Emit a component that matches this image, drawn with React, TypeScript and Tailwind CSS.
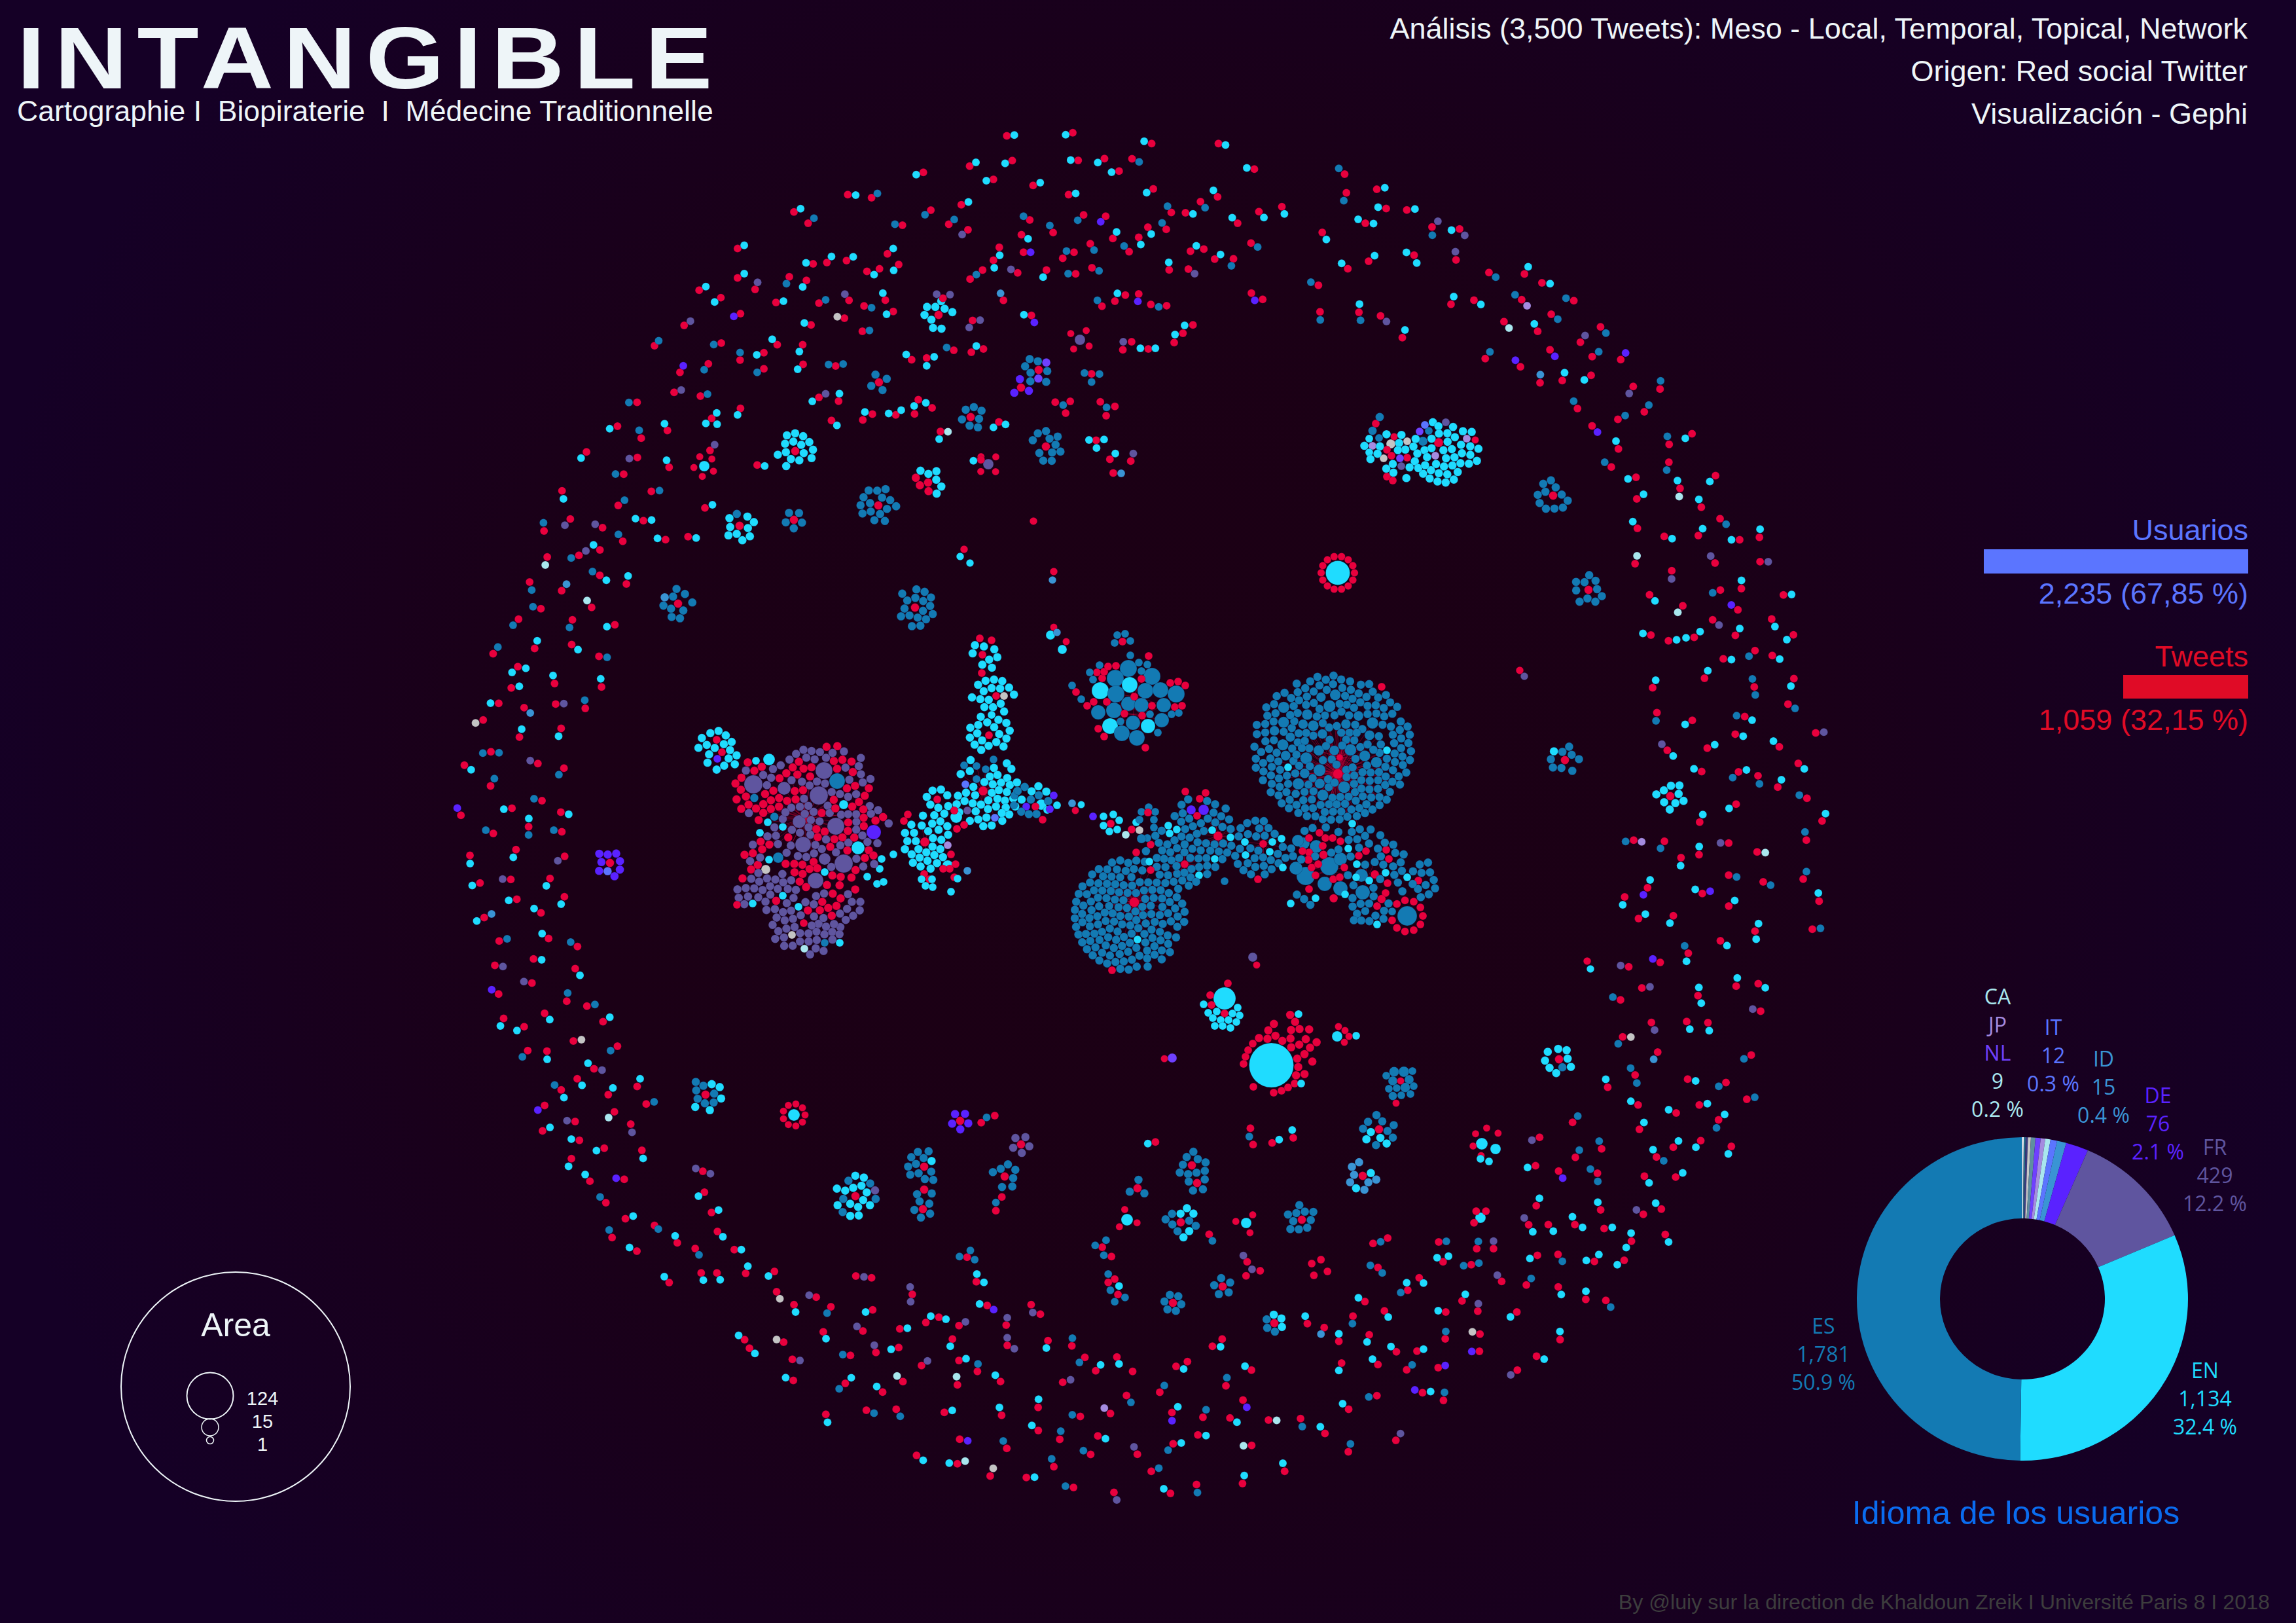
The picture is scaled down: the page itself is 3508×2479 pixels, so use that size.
import React from "react";

const BLUE = "#137ab3", CYAN = "#1fdcff", RED = "#e8003d", PUR = "#5f559f", VIO = "#5a22ff", GRAY = "#c4c4c4",
  LCY = "#a9e7ee", LAV = "#a58be0", MID = "#3a94d4", PER = "#5b75ff", VI2 = "#6f40ff";

type N = { x: number; y: number; r: number; c: string };
type W = [string, number][];

const TOP_DOTS = `844,150r 862,147C 1002,138r 985,146C 1191,181r 1173,172C 1351,181r 1368,187C 1437,283r 1419,278C 857,249r 840,260C 755,271r 770,256C 644,296r 627,305C 812,324r 795,329C 1015,248r 997,247C 1078,241r 1062,257C 1113,291r 1095,295C 1144,242r 1161,254B 907,348r 924,337C 992,385r 1009,380C 1195,362r 1179,377C 1349,394r 1339,368C 1308,413r 1319,437B 1238,456r 1229,431B 1272,457r 1290,462C 1397,499r 1384,477C 1448,453r 1460,476C 1503,433r 1509,462C 463,385r 482,387C 520,397r 534,380B 334,454r 350,441C 368,499r 382,479B 735,425r 752,414C 662,447r 648,465B 594,507r 576,503B 705,503r 718,484B 751,525r 737,544P 899,486r 884,471B 955,536r 947,508B 1028,466r 1014,487B 1081,471r 1069,493V 1098,560r 1107,534C 1182,515r 1190,542C 1226,523r 1216,498B 1160,555r 1165,584C 1137,613r 1125,590B 1044,581r 1053,606B 879,545r 895,561C 826,595r 827,627C 812,647r 884,615r 901,615V 1005,615r 987,610B 978,639r 1316,602r 1298,589C 1284,611r 1429,578r 1445,594B 1387,641r 1382,669B 1342,642r 1356,624C 1233,685r 1232,655C 1279,682r 1294,700P 1009,701r 991,700B 1048,677r 1065,689B 939,686r 931,714C 870,697r 854,683P 814,677C 786,686r 771,704B 756,722r 199,600r 215,587C 380,661r 363,657C 413,656r 424,632C 460,648r 476,633C 558,621r 572,600C 509,691r 526,704C 539,681r 585,664r 573,687C 199,717r 215,700C 241,763r 247,735P 323,713r 316,740B 364,727r 355,753C 107,766r 123,752C 159,796r 144,813C 291,815r 309,810C 394,818r 410,805B 466,807r 456,782P 553,806r 547,778C 502,829r 520,836B 572,851r 556,862C 691,798r 676,782P 708,784P 836,807r 829,779M 1072,830r 1061,807B 1128,786r 1109,779C 1103,810r 1160,781r 1158,811V 1189,823r 1208,833B 1227,828r 1430,778r 1438,807V 1457,803r 206,860r 190,871V 71,907r 86,890P 455,878r 438,872G 375,905r 359,897C 498,930r 515,927B 762,887r 780,886P 754,915P 903,867r 885,864C 910,895V 1290,905r 1270,907C 1266,938r 1247,943C 1245,975r 294,984r 282,962C 160,977r 142,983B 355,984r 347,1011C 262,1016r 245,1024C 205,1045r 205,1015B 0,988r 10,968B 1143,972r 1123,972P 1122,1004r 1183,1001r 1164,998C 1200,998C 788,1001r 771,989C 759,1014r 717,1006r 700,995B 616,1044r 603,1023C 652,1037r 670,1032C 652,1068C 129,1060r 119,1084B 61,1094r 69,1068V 262,1080r 246,1094B 356,1062r 343,1082C 434,1069r 417,1063B 452,1061B 47,1174r 64,1165P 110,1189r 127,1181B 394,1194r 410,1180P 378,1210C 441,1209r 443,1179C 206,1238r 199,1264C 137,1278r 149,1256C 123,1298C 150,1301C 31,1326r 24,1299C 522,1261r 504,1252C 499,1284r 578,1264r 561,1258C 591,1245C 623,1260r 622,1228C 665,1236r 650,1216C 632,1203r 424,1286r 437,1306C 685,1330r 703,1331L 682,1361C 825,1292r 841,1302C 812,1314C 960,1213r 979,1225B 996,1210r 985,1257r 1103,1230r 1083,1234B 1068,1212r 1082,1267r 133,1406r 144,1383P 35,1473r 29,1445C 246,1464r 264,1468C 782,1443r 764,1447C 1091,1441r 1104,1418C 1141,1448r 1147,1418P 1099,1496r 1118,1497M 1058,1365r 1041,1364C 1077,1362C 1059,1396C 1047,1100r 1030,1097B 1066,1101B 1047,1133B`;

const BOTTOM_DOTS = `92,513r 81,531C 105,606r 118,595C 89,417r 76,404P 103,428P 42,745r 38,713C 116,693r 126,717C 75,771r 82,800B 147,776r 160,776C 0,665r 7,682B 168,885r 172,852C 86,883r 90,916C 115,883r 121,914C 27,927r 18,900C 221,876r 210,897C 371,897r 386,901P 400,905r 225,969r 231,1001G 298,994r 285,985P 257,1028r 260,1062C 325,1038r 318,1067B 402,1052r 389,1062C 475,981r 471,947P 472,1015P 593,923r 594,888C 607,926C 613,1032r 599,1025C 625,1051V 694,1028r 697,1064P 711,1072r 524,1086r 509,1081C 537,1095C 500,1110r 561,1124r 573,1107P 648,1122r 650,1088P 384,1149r 373,1128P 452,1139r 466,1136C 311,1153r 316,1184C 166,1189r 155,1169C 238,1200r 225,1188G 175,1228r 185,1252C 254,1279r 268,1284P 361,1261r 347,1257B 408,1247r 405,1214P 450,1225r 436,1233C 549,1186r 545,1219C 650,1215r 650,1180P 663,1230P 725,1193r 722,1227C 769,1217r 770,1182B 492,1307r 503,1286P 561,1284r 574,1276C 595,1334r 596,1300B 793,1270r 783,1293B 852,1268r 856,1300C 813,1331r 822,1304C 881,1334r 982,1289r 975,1323C 961,1311r 1046,1186r 1043,1221C 1028,1219r 1100,1328r 1088,1310C 1266,1296r 1261,1330C 1333,1303r 1323,1278C 1386,1327r 1396,1304B 1444,1317r 1457,1307V 1520,1242r 1506,1243V 1521,1163r 1507,1153G 1457,1185r 1458,1151B 1405,1241r 1417,1232C 1367,1244r 1357,1220C 1317,1166r 1313,1199C 1261,1196r 1261,1162C 1234,1133r 1228,1163M 1287,1081r 1286,1115B 1203,1115r 1199,1081C 1345,1057r 1352,1085C 1458,1062r 1444,1056C 1517,1058r 1518,1024P 1488,1011r 1494,981C 1309,1014r 1297,997C 1388,962r 1375,973B 1409,905r 1417,929C 1386,928C 1333,858r 1319,848B 1341,883B 1505,845r 1491,850B 1519,838B 1453,832r 1442,813C 1463,806C 1561,922r 1553,893P 1445,741r 1459,738B 1515,772r 1518,739B 1546,772r 1546,737P 1351,723r 1338,740B 1324,748r 1022,706r 1028,736B 825,765r 832,733B 812,757B 842,808r 828,802B 576,811r 582,780B 562,808B 590,822B 1092,832r 1085,803P 1101,866P 1116,873r 1090,896r 1228,822r 1211,840r 1240,876r 1215,894r 848,911r 836,888B 836,926r 856,943C 840,962B 854,982r 867,995B 848,1015B 640,535r 629,560B 629,598r 1098,220r 1096,258B 1103,295r 1175,228C 1177,264r 1138,287r 1151,272C 909,290C 923,283r 602,194r 612,170B 627,162r 1514,600r 1532,600r 1510,653r`;

const CODE: Record<string, string> = { r: RED, C: CYAN, B: BLUE, P: PUR, V: VIO, G: GRAY, M: MID, L: LCY };

function buildGraph() {
  let s = 20180412;
  const rnd = () => {
    s |= 0; s = (s + 0x6d2b79f5) | 0;
    let t = Math.imul(s ^ (s >>> 15), 1 | s);
    t = (t + Math.imul(t ^ (t >>> 7), 61 | t)) ^ t;
    return ((t ^ (t >>> 14)) >>> 0) / 4294967296;
  };
  const nodes: N[] = [];
  const edges: [number, number, number, number][] = [];
  const hubs: { x: number; y: number; R: number }[] = [];
  const pick = (w: W) => {
    const tot = w.reduce((a, b) => a + b[1], 0);
    let v = rnd() * tot;
    for (const [c, p] of w) { v -= p; if (v <= 0) return c; }
    return w[0][0];
  };
  const free = (x: number, y: number, r: number, slack = 1) =>
    nodes.every((n) => Math.hypot(n.x - x, n.y - y) > n.r + r - slack);
  const add = (x: number, y: number, r: number, c: string) => { nodes.push({ x, y, r, c }); };
  const list = (r: number, c: string, pts: number[][]) => pts.forEach(([x, y]) => add(x, y, r, c));
  const big = (pts: [number, number, number, string][]) => pts.forEach(([x, y, r, c]) => add(x, y, r, c));
  const hub = (x: number, y: number, R: number, r = 7) => { add(x, y, r, RED); hubs.push({ x, y, R }); };

  // Organic packing: random points relaxed inside a rotated ellipse, around the nodes already placed.
  const fill = (cx: number, cy: number, rx: number, ry: number, w: W, rot = 0, gap = 13, rad = 6.4, fixed = 0) => {
    const a = (rot * Math.PI) / 180, ca = Math.cos(a), sa = Math.sin(a);
    const cell = gap * gap * 0.866;
    const m = Math.max(rx, ry) + 30;
    const pinned: { u: number; v: number; r: number }[] = [];
    let occupied = 0;
    nodes.forEach((n) => {
      const dx = n.x - cx, dy = n.y - cy;
      if (Math.abs(dx) > m || Math.abs(dy) > m) return;
      const u = dx * ca + dy * sa, v = -dx * sa + dy * ca;
      pinned.push({ u, v, r: n.r });
      if ((u * u) / (rx * rx) + (v * v) / (ry * ry) < 1) occupied += Math.PI * n.r * n.r * 1.25;
    });
    const count = fixed || Math.max(0, Math.round((Math.PI * rx * ry - occupied) / cell));
    const pts: { u: number; v: number }[] = [];
    for (let i = 0; i < count; i++) {
      const t = rnd() * 6.283, d = Math.sqrt(rnd());
      pts.push({ u: Math.cos(t) * d * rx, v: Math.sin(t) * d * ry });
    }
    for (let it = 0; it < 70; it++) {
      for (let i = 0; i < pts.length; i++) {
        const p = pts[i];
        for (let j = i + 1; j < pts.length; j++) {
          const q = pts[j];
          const du = q.u - p.u, dv = q.v - p.v;
          if (Math.abs(du) > gap || Math.abs(dv) > gap) continue;
          const d = Math.hypot(du, dv) || 0.01;
          if (d < gap) {
            const f = (gap - d) / d / 2;
            p.u -= du * f; p.v -= dv * f; q.u += du * f; q.v += dv * f;
          }
        }
        for (const k of pinned) {
          const du = p.u - k.u, dv = p.v - k.v;
          const need = rad + k.r + 0.4;
          if (Math.abs(du) > need || Math.abs(dv) > need) continue;
          const d = Math.hypot(du, dv) || 0.01;
          if (d < need) { const f = (need - d) / d; p.u += du * f; p.v += dv * f; }
        }
      }
      for (const p of pts) {
        const e = Math.sqrt((p.u * p.u) / (rx * rx) + (p.v * p.v) / (ry * ry));
        if (e > 1) { p.u /= e; p.v /= e; }
      }
    }
    for (const p of pts) {
      const x = cx + p.u * ca - p.v * sa, y = cy + p.u * sa + p.v * ca;
      if (free(x, y, rad, 2.5)) add(x, y, rad, pick(w));
    }
  };
  const ring = (cx: number, cy: number, R: number, n: number, r: number, w: W, off = 0.3) => {
    for (let i = 0; i < n; i++) {
      const t = off + (i / n) * Math.PI * 2;
      const x = cx + Math.cos(t) * R, y = cy + Math.sin(t) * R;
      if (free(x, y, r, 2)) add(x, y, r, pick(w));
    }
  };
  const star = (cx: number, cy: number, w: W, n = 6, outer = 0) => {
    add(cx, cy, 6.4, RED);
    const total = n + outer;
    if (total <= 6) ring(cx, cy, 13, n, 6.4, w, rnd() * 3);
    else {
      const R = Math.sqrt(total + 1) * 6.8;
      fill(cx, cy, R, R, w, 0, 13, 6.4, total);
    }
  };
  const B: W = [[BLUE, 1]], C: W = [[CYAN, 1]], P: W = [[PUR, 1]], R: W = [[RED, 1]], V: W = [[VIO, 1]];

  // ----- top blue & cyan cluster
  big([
    [1724, 1021, 13, BLUE], [1704, 1036, 13, BLUE], [1760, 1033, 13, BLUE], [1681, 1055, 13, CYAN], [1726, 1046, 12, CYAN],
    [1705, 1060, 13, BLUE], [1750, 1055, 12, BLUE], [1773, 1054, 12, BLUE], [1797, 1060, 13, BLUE], [1724, 1075, 11, BLUE],
    [1744, 1077, 11, BLUE], [1778, 1077, 11, BLUE], [1678, 1088, 11, BLUE], [1702, 1085, 12, BLUE], [1731, 1104, 11, BLUE],
    [1775, 1100, 11, BLUE], [1696, 1109, 12, CYAN], [1754, 1109, 11, CYAN], [1714, 1120, 12, BLUE], [1737, 1127, 12, BLUE],
  ]);
  list(6, RED, [[1733,1064],[1744,1037],[1760,1078],[1718,1090],[1745,1093],[1691,1072],[1671,1072],[1661,1078],[1684,1036],[1676,1027],[1687,1026],[1693,1018],[1705,1017],[1755,1002],[1788,1043],[1800,1041],[1811,1047],[1795,1080],[1806,1078],[1678,1113],[1687,1125],[1750,1142],[1644,1057],[1715,980]]);
  list(6, BLUE, [[1727,1001],[1740,1012],[1753,1015],[1680,1016],[1665,1027],[1670,1038],[1744,1025],[1638,1047],[1652,1068],[1757,1091],[1790,1091],[1801,1089],[1712,1102],[1769,1119],[1707,970],[1719,968],[1703,982],[1727,979]]);
  hubs.push({ x: 1733, y: 1064, R: 50 }, { x: 1745, y: 1093, R: 40 }, { x: 1718, y: 1090, R: 40 });
  list(7, CYAN, [[1605, 970], [1623, 992]]);
  list(5.5, RED, [[1610, 958], [1629, 980]]);

  // ----- big blue A
  hub(2044, 1182, 95, 7.5); hub(2047, 1157, 50, 5);
  add(2119, 1146, 6, CYAN); add(1968, 1172, 6, CYAN); add(2066, 1258, 6, CYAN); add(2111, 1049, 6, RED);
  for (let i = 0; i < 70; i++) {
    const t = rnd() * 6.283, d = Math.sqrt(rnd()) * 85;
    const x = 2025 + Math.cos(t) * d, y = 1135 + Math.sin(t) * d;
    const r = 7.2 + rnd() * 2;
    if (free(x, y, r, 0)) add(x, y, r, BLUE);
  }
  fill(2035, 1142, 121, 110, B);

  // ----- big blue B
  hub(1733, 1378, 60, 7.5); add(1738, 1435, 6, CYAN); add(1699, 1482, 6, RED);
  fill(1726, 1397, 84, 84, B);

  // ----- central band
  hub(1861, 1277, 40); hub(1810, 1320, 35, 6); hub(1930, 1289, 35, 6);
  list(6, CYAN, [[1785,1261],[1787,1273],[1798,1267],[1852,1268],[1880,1279],[1902,1286],[1944,1286],[1958,1281],[1940,1301],[1903,1306],[1856,1312],[1832,1337],[1756,1316]]);
  list(6, RED, [[1758,1290],[1736,1302],[1758,1329],[1922,1343]]);
  big([[1820, 1237, 7, VIO], [1839, 1237, 8, VIO], [1871, 1346, 6, BLUE]]);
  list(6, RED, [[1811, 1209], [1842, 1211], [1833, 1220], [1829, 1246]]);
  big([[1686, 1247, 6, CYAN], [1701, 1244, 6, CYAN], [1710, 1253, 6, CYAN], [1697, 1258, 6, RED], [1686, 1261, 6, CYAN], [1695, 1270, 6, CYAN], [1707, 1267, 6, CYAN], [1736, 1256, 6, CYAN], [1729, 1267, 6, RED], [1741, 1268, 6, GRAY], [1720, 1275, 6, LCY], [1753, 1280, 6, BLUE],[1744, 1281, 7, BLUE], [1670, 1247, 6, VIO], [1638, 1227, 6, MID], [1652, 1229, 5.5, CYAN], [1643, 1238, 5.5, RED],
    [1744, 1240, 6, BLUE], [1755, 1233, 6, BLUE], [1765, 1240, 6, BLUE], [1741, 1252, 6, BLUE], [1754, 1241, 6, RED], [1763, 1252, 6, BLUE], [1763, 1264, 6, BLUE]]);
  fill(1818, 1292, 88, 50, B, -42);
  fill(1832, 1240, 30, 24, B);
  fill(1922, 1295, 38, 42, B);

  // ----- bridge nodes
  big([[1591, 1229, 8, CYAN], [1600, 1237, 6, CYAN], [1582, 1232, 6, RED], [1610, 1215, 6, VIO], [1604, 1236, 6, VIO], [1593, 1252, 6, RED], [1568, 1232, 6, VIO], [1615, 1230, 6, CYAN]]);
  fill(1578, 1222, 30, 22, [[CYAN, 5], [BLUE, 3]], 0, 13, 6.4, 14);

  // ----- right mixed clusters
  big([[2031,1323,14,BLUE],[1995,1338,14,BLUE],[2048,1312,10,BLUE],[1980,1326,10,BLUE],[2024,1350,11,BLUE],[1992,1288,9,BLUE],[2011,1293,10,BLUE],[2048,1357,11,BLUE],[2082,1363,11,BLUE],[2150,1399,15,BLUE],[1983,1284,9,BLUE],[2080,1337,10,BLUE]]);
  ring(2150, 1399, 24, 11, 6, [[RED, 6], [BLUE, 1]], 0);
  list(6, RED, [[2016,1272],[2025,1280],[2036,1280],[2000,1280],[2000,1302],[1990,1300],[2021,1292],[2048,1285],[2004,1325],[2014,1320],[2054,1325],[2010,1337],[2000,1358],[2037,1343],[2047,1340],[2076,1307],[2120,1349],[2087,1300],[2117,1364],[2104,1384],[2118,1298],[2122,1312],[2167,1345]]);
  list(6, CYAN, [[1960,1325],[2060,1296],[2073,1320],[2117,1333],[2150,1340],[2055,1366],[2072,1340],[2010,1372],[1972,1380],[2104,1412],[2092,1345]]);
  hubs.push({ x: 2030, y: 1330, R: 40 }, { x: 2090, y: 1340, R: 30 });
  fill(2020, 1325, 62, 62, [[BLUE, 6], [RED, 1]]);
  fill(2110, 1345, 62, 58, [[BLUE, 9], [RED, 1]], 20);
  fill(2085, 1288, 32, 22, B);
  fill(2178, 1345, 20, 28, B);
  fill(2085, 1390, 26, 20, B);

  // ----- cyan tower
  big([[1497, 975, 6, RED], [1515, 978, 6, RED], [1501, 1000, 6, RED], [1500, 1028, 6, RED], [1522, 1063, 6, RED], [1534, 1063, 6, GRAY], [1511, 1123, 6, RED]]);
  fill(1505, 1000, 19, 27, C);
  fill(1518, 1064, 33, 26, C);
  add(1515, 1092, 6, CYAN);
  fill(1512, 1120, 31, 28, C);
  // ----- cyan big
  hub(1502, 1208, 45);
  add(1475, 1198, 6, PER); add(1520, 1249, 6, PER); add(1478, 1238, 6, PUR);
  list(6, BLUE, [[1518,1160],[1473,1169],[1492,1170],[1506,1175],[1492,1190],[1550,1215],[1555,1208],[1549,1230]]);
  fill(1505, 1207, 50, 55, C);
  // ----- cyan side
  add(1432, 1221, 6, RED);
  fill(1432, 1222, 18, 26, C);
  hub(1413, 1286, 30);
  add(1461, 1248, 9, CYAN); add(1448, 1322, 8, CYAN); add(1448, 1291, 6, LAV);
  list(6, RED, [[1458,1238],[1473,1260],[1462,1266],[1381,1254],[1387,1244],[1453,1305],[1460,1320],[1412,1335],[1420,1343],[1451,1327],[1441,1327],[1458,1340]]);
  list(6, CYAN, [[1463,1342],[1453,1362],[1408,1343],[1414,1353],[1424,1343],[1425,1355]]);
  add(1478, 1330, 6, MID);
  fill(1418, 1285, 37, 42, C);

  // ----- purple/red cluster
  big([[1151,1198,14,PUR],[1198,1204,10,PUR],[1259,1177,13,PUR],[1251,1215,14,PUR],[1279,1193,12,BLUE],[1221,1255,10,PUR],[1277,1262,13,PUR],[1227,1290,12,PUR],[1289,1319,14,PUR],[1246,1345,12,PUR],[1260,1312,9,PUR],[1335,1271,11,VIO],[1311,1295,10,CYAN],[1289,1229,7,CYAN],[1175,1160,9,CYAN],[1170,1328,7,GRAY],[1189,1310,8,BLUE]]);
  list(6, CYAN, [[1155,1162],[1173,1256],[1196,1263],[1161,1272],[1175,1313],[1260,1332],[1325,1339],[1344,1327],[1347,1312],[1365,1305],[1340,1350],[1350,1347],[1196,1368],[1150,1380],[1220,1385],[1283,1440]]);
  hubs.push({ x: 1230, y: 1250, R: 70 });
  add(1095, 1130, 6, RED); add(1096, 1159, 6, VIO); add(1103, 1149, 6, RED);
  fill(1095, 1146, 36, 26, C, 50);
  fill(1165, 1205, 42, 48, [[RED, 8], [PUR, 2], [BLUE, 1]]);
  fill(1262, 1190, 68, 52, [[RED, 5], [PUR, 5]]);
  fill(1310, 1270, 50, 42, [[RED, 7], [PUR, 3]]);
  fill(1225, 1265, 58, 48, [[PUR, 7], [RED, 3]]);
  fill(1275, 1325, 62, 42, [[RED, 6], [PUR, 4]]);
  fill(1175, 1310, 38, 26, [[PUR, 5], [RED, 5]]);
  fill(1170, 1360, 46, 30, [[PUR, 9], [RED, 1]]);
  fill(1275, 1385, 42, 22, [[PUR, 7], [RED, 2]]);
  add(1228, 1410, 6, RED); add(1210, 1428, 6, GRAY); add(1229, 1449, 6, LCY); add(1260, 1440, 6, BLUE); add(1126, 1382, 6, RED);
  fill(1232, 1418, 52, 40, P);

  // ----- top right cyan
  hub(2198, 676, 25);
  add(2150, 699, 6, RED); add(2183, 658, 6, BLUE);
  big([[2177,649,6,PER],[2209,645,6,PUR],[2169,659,6,VI2],[2241,670,6,LAV],[2254,672,5.5,RED],[2193,696,6,LAV],[2174,674,7,BLUE]]);
  fill(2209, 689, 50, 48, C);
  big([[2125,678,7,GRAY],[2097,681,6,LAV],[2119,687,6,RED],[2126,696,6,RED],[2139,700,6,VI2],[2114,700,6,GRAY],[2141,712,6,PUR],[2150,674,6,GRAY],[2130,667,5.5,RED],[2092,670,6,CYAN],[2092,691,6,CYAN],[2107,669,6,BLUE]]);
  list(6, RED, [[2119, 728], [2128, 734], [2102, 647]]);
  list(6.5, BLUE, [[2097, 658], [2108, 637]]);
  fill(2122, 685, 38, 24, C, 0, 13, 6.4, 16);
  fill(2138, 715, 20, 18, C, 0, 13, 6.4, 8);

  // ----- isolated big
  add(2044, 875, 18.5, CYAN); ring(2044, 875, 25.5, 14, 5.7, R, 0);
  add(1942.5, 1627, 34, CYAN);
  list(6, RED, [[1900,1625],[1903,1614],[1907,1604],[1914,1594],[1915,1660],[1946,1669],[1958,1666],[1968,1661],[1978,1655]]);
  add(1988, 1655, 6, CYAN); add(1984, 1549, 6, CYAN);
  fill(1972, 1598, 50, 50, R);
  add(1871, 1525, 17, CYAN); list(6, RED, [[1849, 1520], [1876, 1502], [1851, 1535], [1871, 1548]]);
  list(6, CYAN, [[1839, 1534], [1846, 1547], [1859, 1545], [1891, 1539], [1894, 1551], [1883, 1548], [1853, 1555], [1865, 1558], [1877, 1558], [1889, 1561], [1856, 1567], [1868, 1567], [1880, 1570]]);
  big([[2043, 1583, 8, CYAN], [2072, 1582, 6, CYAN], [2045, 1568, 5.5, RED], [2055, 1574, 5.5, RED], [2061, 1583, 5.5, RED], [2054, 1592, 5.5, RED], [1914, 1462, 7, PUR], [1920, 1474, 5.5, RED], [1791, 1616, 7, VI2], [1779, 1617, 5.5, RED]]);
  big([[2130,1637,7.5,BLUE],[2145,1637,8,BLUE],[2158,1636,6,BLUE],[2118,1643,6,BLUE],[2128,1651,7,BLUE],[2153,1649,7,BLUE],[2122,1663,6,BLUE],[2134,1662,6,BLUE],[2147,1661,7.5,BLUE],[2160,1659,6,BLUE],[2128,1674,6.5,BLUE],[2141,1673,6,BLUE],[2155,1671,6,BLUE],[2140,1651,5.5,RED],[2133,1685,5.5,RED]]);

  // ----- small stars
  const S = star;
  S(1398, 928, B, 6, 11); S(1342, 772, B, 6, 9); S(1215, 689, C, 6, 9); S(1418, 737, [[CYAN, 4], [RED, 2]], 6, 3);
  S(1130, 803, [[CYAN, 3], [RED, 1], [BLUE, 1]], 6, 4); S(1213, 794, B, 5); S(1036, 922, [[BLUE, 5], [MID, 1]], 6, 4);
  S(2373, 757, B, 6, 5); S(2427, 901, B, 6, 4); S(2391, 1161, [[BLUE, 5], [CYAN, 1]], 6, 3); S(2552, 1216, C, 6, 3);
  S(1434, 481, C, 6, 3); S(1587, 565, [[BLUE, 3], [VI2, 1], [CYAN, 1]], 6, 3); S(1343, 584, B, 4); S(1560, 592, V, 3);
  S(1483, 637, B, 5, 2); S(1598, 682, B, 6, 5);
  add(1650, 519, 8, PUR); ring(1650, 519, 17, 4, 5.5, R, 0.6);
  add(1510, 709, 8, PUR); ring(1510, 709, 16, 4, 5.5, R, 0.8);
  add(1076, 712, 8, CYAN); ring(1076, 712, 16, 5, 5.5, R, 0.5);
  S(932, 1318, [[VIO, 4], [PER, 1]], 6, 3); S(2382, 1618, [[CYAN, 4], [BLUE, 0.5]], 6, 3);
  S(1078, 1672, [[BLUE, 3], [CYAN, 1]], 6, 6);
  add(1213, 1703, 9, CYAN); ring(1213, 1703, 17, 9, 5.5, R, 0);
  S(1467, 1712, V, 5); S(1560, 1748, P, 5); S(1412, 1782, [[BLUE, 5], [CYAN, 1]], 6, 6);
  S(1307, 1827, [[CYAN, 5], [BLUE, 1], [PUR, 0.5]], 6, 14); S(1412, 1817, B, 3); S(1410, 1847, B, 5); S(1535, 1797, B, 5, 2);
  S(1821, 1780, B, 6, 3); S(1829, 1807, B, 5, 1); S(2107, 1725, [[BLUE, 2], [CYAN, 2]], 6, 6); S(2082, 1796, [[MID, 3], [CYAN, 1]], 6, 3);
  add(2264, 1747, 9, CYAN); add(2285, 1755, 8, CYAN); ring(2272, 1745, 22, 7, 5.5, R, 0.2); list(6, CYAN, [[2262, 1770], [2275, 1774]]);
  S(1804, 1867, [[CYAN, 5], [BLUE, 1]], 6, 5); S(1989, 1863, B, 6, 4); S(1738, 1815, B, 3); S(1868, 1965, B, 5); S(1792, 1990, B, 6);
  S(1947, 2021, [[CYAN, 3], [BLUE, 1], [PER, 0.5]], 6);
  add(1722, 1863, 9, CYAN); ring(1722, 1863, 16, 3, 5.5, R, 0.3);
  add(1904, 1868, 8, CYAN); ring(1904, 1868, 16, 3, 5.5, R, 1.2);
  add(2262, 1860, 8, CYAN);
  // ----- interior singletons
  big([[1467, 850, 5.8, CYAN], [1473, 839, 5.8, RED], [1482, 860, 5.8, CYAN], [1579, 796, 5.8, RED], [1608, 886, 5.8, MID], [1610, 873, 5.8, RED], [1615, 966, 5.8, MID], [2329, 1033, 5.8, PUR], [2322, 1024, 5.8, RED], [2430, 1480, 5.8, CYAN], [2425, 1468, 5.8, RED]]);

  // ----- scattered dots read off the reference
  const parse = (txt: string, fx: (v: number) => number, fy: (v: number) => number) => {
    for (const m of txt.matchAll(/(\d+),(\d+)([a-zA-Z])/g)) {
      add(fx(+m[1]), fy(+m[2]), 6, CODE[m[3]]);
    }
  };
  parse(TOP_DOTS, (v) => 1000 + v / 1.568, (v) => 150 + v / 2.613);
  parse(BOTTOM_DOTS, (v) => 1000 + v / 1.206, (v) => 1650 + v / 3);

  // ----- ring of pairs
  const cx0 = 1752, cy0 = 1245;
  const lerp = (arr: number[], deg: number) => {
    const f = (deg / 45) % 8, i = Math.floor(f), t = f - i;
    return arr[i] * (1 - t) + arr[(i + 1) % 8] * t;
  };
  const inner = [730, 780, 700, 880, 880, 790, 680, 900];
  const outer = [1040, 1020, 1040, 1040, 1050, 1010, 1040, 1020];
  const partner: W = [[CYAN, 50], [BLUE, 30], [PUR, 9], [VIO, 4], [GRAY, 2], [MID, 2], [LAV, 1], [LCY, 2]];
  let placed = 0, tries = 0;
  while (placed < 340 && tries < 30000) {
    tries++;
    const deg = rnd() * 360;
    const a = lerp(inner, deg), b = lerp(outer, deg);
    const d = Math.sqrt(a * a + rnd() * (b * b - a * a));
    const t = (deg * Math.PI) / 180;
    const x = cx0 + Math.cos(t) * d, y = cy0 + Math.sin(t) * d;
    if (x > 2700 && y > 1480) continue;
    if (x > 990 && x < 2005 && y < 750) continue;
    if (x > 990 && x < 2305 && y > 1640 && y < 2105) continue;
    if (deg > 285 && deg < 340 && d < 960 && rnd() < 0.55) continue;
    const o = rnd() * 6.283;
    const x2 = x + Math.cos(o) * 12.5, y2 = y + Math.sin(o) * 12.5;
    if (!nodes.every((n) => Math.hypot(n.x - x, n.y - y) > n.r + 21 && Math.hypot(n.x - x2, n.y - y2) > n.r + 19)) continue;
    add(x, y, 6, RED);
    add(x2, y2, 6, pick(partner));
    if (rnd() < 0.13) {
      const o2 = o + 2 + rnd() * 2;
      const x3 = x + Math.cos(o2) * 12.5, y3 = y + Math.sin(o2) * 12.5;
      if (free(x3, y3, 6)) add(x3, y3, 6, pick(partner));
    }
    placed++;
  }
  hubs.forEach((h) => {
    nodes.forEach((n) => {
      const d = Math.hypot(n.x - h.x, n.y - h.y);
      if (d < h.R && d > 1) edges.push([h.x, h.y, n.x, n.y]);
    });
  });
  return { nodes, edges };
}

const graph = buildGraph();

function Network() {
  return (
    <svg className="absolute inset-0" width={3508} height={2479} viewBox="0 0 3508 2479">
      <g stroke="#e8003d" strokeOpacity={0.45} strokeWidth={0.8}>
        {graph.edges.map((e, i) => (
          <line key={i} x1={e[0]} y1={e[1]} x2={e[2]} y2={e[3]} />
        ))}
      </g>
      <g stroke="#140026" strokeOpacity={0.35} strokeWidth={0.6}>
        {graph.nodes.map((n, i) => (
          <circle key={i} cx={n.x} cy={n.y} r={n.r} fill={n.c} />
        ))}
      </g>
    </svg>
  );
}

const CX = 390, CY = 494;
function slice(a0: number, a1: number, rx = 253, ry = 247, ix = 126, iy = 123) {
  const p = (a: number, x: number, y: number) => `${CX + x * Math.sin(a)} ${CY - y * Math.cos(a)}`;
  const large = a1 - a0 > Math.PI ? 1 : 0;
  return `M${p(a0, rx, ry)}A${rx} ${ry} 0 ${large} 1 ${p(a1, rx, ry)}L${p(a1, ix, iy)}A${ix} ${iy} 0 ${large} 0 ${p(a0, ix, iy)}Z`;
}
const A = (dx: number) => Math.asin(dx / 253);
const bounds: [number, number, string][] = [
  [A(-0.7), A(2), "#ffffff"], [A(2), A(5), "#2b6c8c"], [A(5), A(8.5), "#3a3a80"], [A(8.5), A(13), "#c8c8c8"],
  [A(13), A(20), "#5f8fa0"], [A(20), A(28), VI2], [A(28), A(35), LAV], [A(35), A(43), LCY], [A(43), A(53), PER],
  [A(53), A(67), MID], [A(67), A(100), VIO], [A(100), (66.8 * Math.PI) / 180, PUR],
  [(66.8 * Math.PI) / 180, (180.8 * Math.PI) / 180, CYAN], [(180.8 * Math.PI) / 180, Math.PI * 2 + A(-0.7), BLUE],
];

function Label({ x, y, lines }: { x: number; y: number; lines: [string, string][] }) {
  return (
    <text x={x} y={y} textAnchor="middle" className="font-['Open_Sans',sans-serif] text-[32px]">
      {lines.map(([t, c], i) => (
        <tspan key={i} x={x} dy={i === 0 ? 0 : 43} fill={c}>{t}</tspan>
      ))}
    </text>
  );
}

function Donut() {
  return (
    <svg width={808} height={860} viewBox="0 0 808 860" className="shrink-0 self-end">
      {bounds.map(([a, b, c], i) => (
        <path key={i} d={slice(a, b)} fill={c} />
      ))}
      <Label x={352} y={44} lines={[["CA", LCY], ["JP", LAV], ["NL", VI2], ["9", LCY], ["0.2 %", LCY]]} />
      <Label x={437} y={91} lines={[["IT", PER], ["12", PER], ["0.3 %", PER]]} />
      <Label x={514} y={139} lines={[["ID", MID], ["15", MID], ["0.4 %", MID]]} />
      <Label x={597} y={195} lines={[["DE", VIO], ["76", VIO], ["2.1 %", VIO]]} />
      <Label x={684} y={274} lines={[["FR", PUR], ["429", PUR], ["12.2 %", PUR]]} />
      <Label x={669} y={615} lines={[["EN", CYAN], ["1,134", CYAN], ["32.4 %", CYAN]]} />
      <Label x={86} y={547} lines={[["ES", BLUE], ["1,781", BLUE], ["50.9 %", BLUE]]} />
      <text x={380} y={838} textAnchor="middle" fill="#0a6cf0" className="text-[50px]">Idioma de los usuarios</text>
    </svg>
  );
}

export default function App() {
  return (
    <div className="relative w-[3508px] h-[2479px] overflow-hidden bg-[radial-gradient(circle_at_50%_50%,#1c0014_0%,#1b0016_42%,#150026_85%)] font-['Liberation_Sans',Arial,sans-serif] text-[#eef5f8]">
      <Network />
      <div className="relative flex flex-col h-full">
        <header className="flex justify-between items-start">
          <div className="pl-[26px] pt-[29px]">
            <h1 className="text-[134px] leading-[120px] font-bold tracking-[12.75px] origin-left scale-x-[1.15] whitespace-nowrap">INTANGIBLE</h1>
            <p className="text-[44.5px] leading-[42px] whitespace-pre">Cartographie I  Biopiraterie  I  Médecine Traditionnelle</p>
          </div>
          <div className="pr-[74px] pt-[11px] text-right text-[45px] leading-[65px]">
            <p>Análisis (3,500 Tweets): Meso - Local, Temporal, Topical, Network</p>
            <p>Origen: Red social Twitter</p>
            <p>Visualización - Gephi</p>
          </div>
        </header>

        <section className="mt-[582px] pr-[73px] flex flex-col items-end text-[45px] leading-[44px]">
          <p className="text-[#5b75ff]">Usuarios</p>
          <div className="mt-[7px] w-[404px] h-[37px] bg-[#5b75ff]" />
          <p className="mt-[9px] text-[#5b75ff]">2,235 (67,85 %)</p>
          <p className="mt-[52px] text-[#e00b26]">Tweets</p>
          <div className="mt-[6px] w-[191px] h-[36px] bg-[#e00b26]" />
          <p className="mt-[11px] text-[#e00b26]">1,059 (32,15 %)</p>
        </section>

        <div className="mt-auto flex justify-between items-end">
          <div className="ml-[184px] mb-[185px] w-[352px] h-[352px] rounded-full border-2 border-[#eef5f8] flex flex-col">
            <p className="mt-[56px] text-center text-[50px] leading-[48px]">Area</p>
            <div className="mt-[47px] ml-[97px] flex">
              <svg width={76} height={116} viewBox="0 0 76 116" fill="none" stroke="#eef5f8" className="shrink-0">
                <circle cx={38} cy={37} r={35.5} strokeWidth={2} />
                <circle cx={38} cy={85} r={13} strokeWidth={1.5} />
                <circle cx={38} cy={105} r={5.5} strokeWidth={1.5} />
              </svg>
              <div className="ml-[12px] mt-[24px] w-[60px] text-center text-[29px] leading-[35px]">
                <p>124</p>
                <p>15</p>
                <p>1</p>
              </div>
            </div>
          </div>
          <div className="flex flex-col items-end">
            <Donut />
            <p className="mt-[82px] mb-[17px] pr-[40px] text-[32.25px] leading-[30px] text-[#3d3d3d] whitespace-nowrap">By @luiy sur la direction de Khaldoun Zreik I Université Paris 8 I 2018</p>
          </div>
        </div>
      </div>
    </div>
  );
}
